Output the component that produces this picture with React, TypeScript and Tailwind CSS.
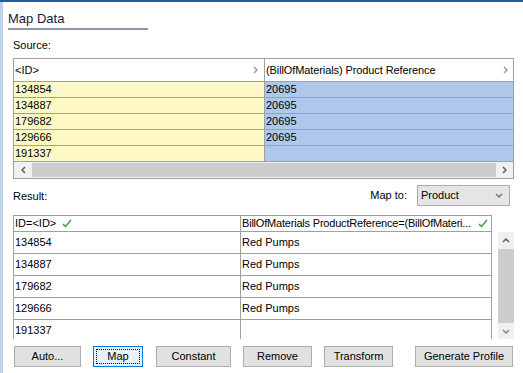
const sourceRows = [
  ['134854', '20695'],
  ['134887', '20695'],
  ['179682', '20695'],
  ['129666', '20695'],
  ['191337', ''],
]

const resultRows = [
  ['134854', 'Red Pumps'],
  ['134887', 'Red Pumps'],
  ['179682', 'Red Pumps'],
  ['129666', 'Red Pumps'],
  ['191337', ''],
]

function Chevron({ dir, color = '#606060', w = 5, h = 8 }: { dir: 'l' | 'r' | 'u' | 'd'; color?: string; w?: number; h?: number }) {
  const pts = {
    l: `${w - 1},1 1,${h / 2} ${w - 1},${h - 1}`,
    r: `1,1 ${w - 1},${h / 2} 1,${h - 1}`,
    u: `1,${h - 1} ${w / 2},1 ${w - 1},${h - 1}`,
    d: `1,1 ${w / 2},${h - 1} ${w - 1},1`,
  }[dir]
  return (
    <svg width={w} height={h} viewBox={`0 0 ${w} ${h}`} className="shrink-0">
      <polyline points={pts} fill="none" stroke={color} strokeWidth="1.5" />
    </svg>
  )
}

function Check() {
  return (
    <svg width="10" height="9" viewBox="0 0 10 9" className="shrink-0">
      <polyline points="1,5 3.5,7.5 9,1" fill="none" stroke="#3f9b3f" strokeWidth="1.5" />
    </svg>
  )
}

function Btn({ label, className }: { label: string; className: string }) {
  return (
    <div
      className={`flex h-[21px] items-center justify-center border border-[#adadad] bg-[#e1e1e1] ${className}`}
    >
      {label}
    </div>
  )
}

export default function App() {
  return (
    <div className="flex h-[373px] w-[523px] flex-col overflow-hidden bg-white font-['Liberation_Sans',Arial,sans-serif] text-[11px] text-black">
      <div className="h-[2px] shrink-0 bg-[#1f5ea8]" />
      <div className="flex flex-1">
        <div className="w-[3px] shrink-0 bg-[#bcd2ee]" />
        <div className="flex flex-1 flex-col">
          <div className="flex h-[26px] items-end pb-[3px] pl-[5px] text-[13px] leading-none text-[#15203a]">
            Map Data
          </div>
          <div className="ml-[5px] h-[2px] w-[140px] bg-[#8a98aa]" />
          <div className="ml-[10px] mt-[8px] h-[14px] leading-[14px]">Source:</div>

          {/* source grid */}
          <div className="ml-[10px] mt-[6px] w-[501px] border border-[#a0a0a0]">
            <div className="flex h-[23px] border-b border-[#a0a0a0] bg-white">
              <div className="flex w-[251px] items-center justify-between border-r border-[#a0a0a0] pl-[1px] pr-[6px]">
                <span>&lt;ID&gt;</span>
                <Chevron dir="r" color="#9a9a9a" />
              </div>
              <div className="flex flex-1 items-center justify-between pl-[1px] pr-[5px]">
                <span className="tracking-[-0.1px]">(BillOfMaterials) Product Reference</span>
                <Chevron dir="r" color="#9a9a9a" />
              </div>
            </div>
            {sourceRows.map(([a, b], i) => (
              <div key={i} className="flex h-[16px] border-b border-[#a0a0a0] leading-[15px]">
                <div className="w-[251px] border-r border-[#a0a0a0] bg-[#fdf8c5] pl-[1px]">{a}</div>
                <div className="flex-1 bg-[#adc8e9] pl-[1px]">{b}</div>
              </div>
            ))}
            <div className="flex h-[16px] bg-[#f0f0f0]">
              <div className="flex w-[18px] items-center justify-center">
                <Chevron dir="l" />
              </div>
              <div className="my-[1px] flex-1 bg-[#cdcdcd]" />
              <div className="flex w-[17px] items-center justify-center">
                <Chevron dir="r" />
              </div>
            </div>
          </div>

          {/* result header */}
          <div className="ml-[10px] mt-[5px] flex h-[22px] w-[501px] items-center">
            <span className="pt-[3px]">Result:</span>
            <span className="ml-auto mr-[10px]">Map to:</span>
            <div className="mr-[4px] flex h-[21px] w-[93px] items-center justify-between border border-[#acacac] bg-[#e5e5e5] pl-[3px] pr-[6px]">
              <span>Product</span>
              <Chevron dir="d" color="#777777" w={8} h={5} />
            </div>
          </div>

          {/* result grid */}
          <div className="ml-[10px] mt-[9px] flex h-[124px]">
            <div className="w-[479px] overflow-hidden border-l border-r border-t border-[#a0a0a0]">
              <div className="flex h-[16px] border-b border-[#a0a0a0] leading-[15px]">
                <div className="flex w-[227px] items-center border-r border-[#a0a0a0] pl-[1px]">
                  <span>ID=&lt;ID&gt;</span>
                  <span className="ml-[6px]">
                    <Check />
                  </span>
                </div>
                <div className="flex min-w-0 flex-1 items-center justify-between pl-[1px] pr-[3px]">
                  <span className="whitespace-nowrap tracking-[-0.2px]">
                    BillOfMaterials ProductReference=(BillOfMateri...
                  </span>
                  <Check />
                </div>
              </div>
              {resultRows.map(([a, b], i) => (
                <div key={i} className="flex h-[22px] border-b border-[#a0a0a0] leading-[21px]">
                  <div className="w-[227px] border-r border-[#a0a0a0] pl-[1px]">{a}</div>
                  <div className="flex-1 pl-[1px]">{b}</div>
                </div>
              ))}
            </div>
            <div className="ml-[6px] mt-[17px] flex h-[107px] w-[16px] flex-col bg-[#f0f0f0]">
              <div className="flex h-[17px] items-center justify-center">
                <Chevron dir="u" w={8} h={5} />
              </div>
              <div className="flex-1 bg-[#cdcdcd]" />
              <div className="flex h-[16px] items-center justify-center">
                <Chevron dir="d" color="#8a8a8a" w={8} h={5} />
              </div>
            </div>
          </div>

          {/* buttons */}
          <div className="ml-[11px] mt-[7px] flex">
            <Btn label="Auto..." className="w-[67px]" />
            <div className="ml-[12px] flex h-[21px] w-[50px] items-center justify-center border border-[#0078d7] bg-[#e5f1fb] outline-1 outline-offset-[-4px] outline-black outline-dotted">
              Map
            </div>
            <Btn label="Constant" className="ml-[13px] w-[75px]" />
            <Btn label="Remove" className="ml-[12px] w-[69px]" />
            <Btn label="Transform" className="ml-[12px] w-[69px]" />
            <Btn label="Generate Profile" className="ml-[22px] w-[98px]" />
          </div>
        </div>
      </div>
    </div>
  )
}
